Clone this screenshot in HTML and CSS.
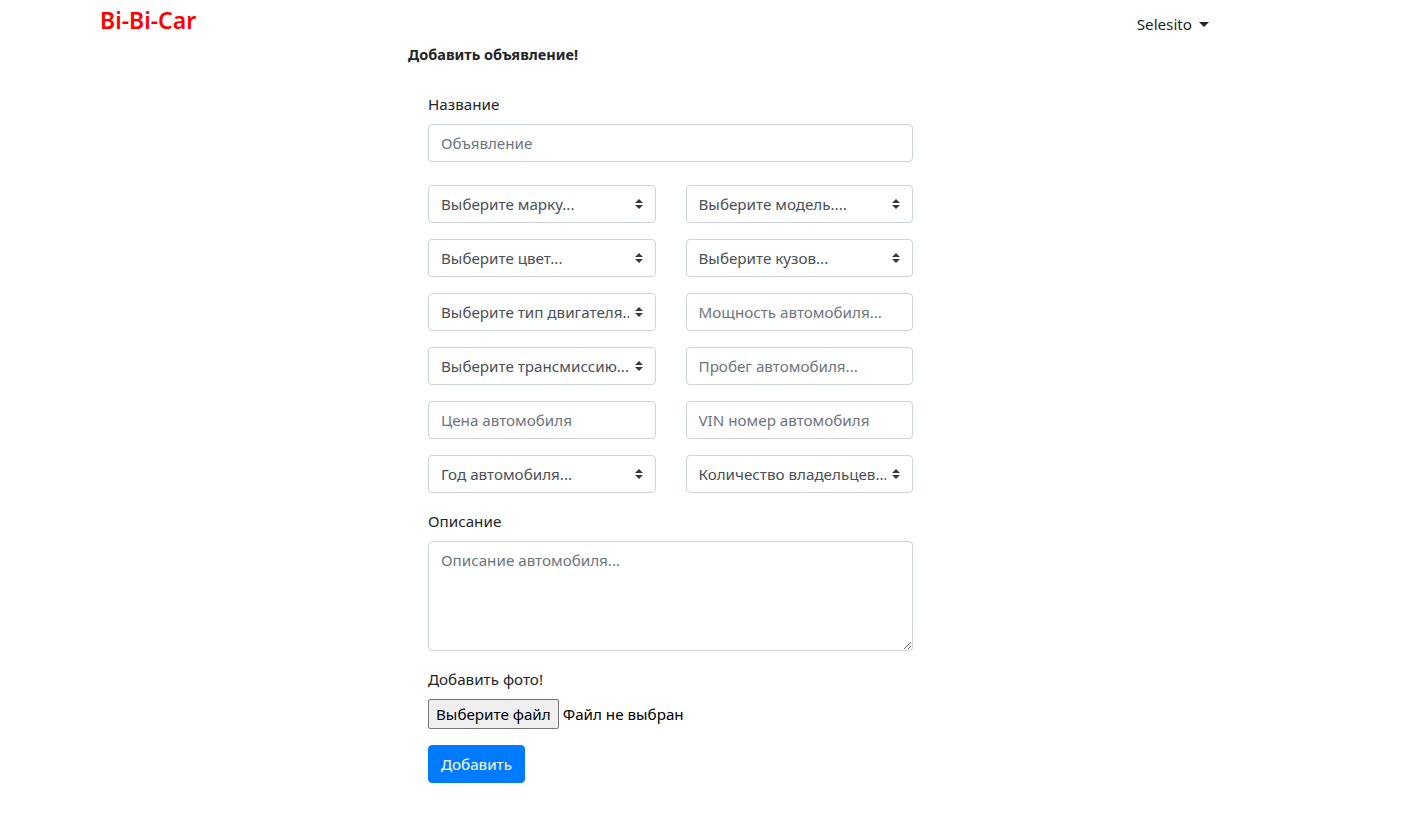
FILE: index.html
```html
<!DOCTYPE html>
<html lang="ru">
<head>
<meta charset="utf-8">
<title>Bi-Bi-Car</title>
<link rel="stylesheet" href="styles.css">
</head>
<body>
<nav class="navbar">
  <a class="brand" href="#">Bi-Bi-Car</a>
  <a class="user" href="#">Selesito <span class="caret"></span></a>
</nav>
<main class="page">
  <h6 class="title">Добавить объявление!</h6>
  <form class="form">
    <div class="group first">
      <label class="label">Название</label>
      <input class="control" type="text" placeholder="Объявление">
    </div>
    <div class="grid">
      <select class="control select"><option>Выберите марку...</option></select>
      <select class="control select"><option>Выберите модель....</option></select>
      <select class="control select"><option>Выберите цвет...</option></select>
      <select class="control select"><option>Выберите кузов...</option></select>
      <select class="control select"><option>Выберите тип двигателя...</option></select>
      <input class="control" type="text" placeholder="Мощность автомобиля...">
      <select class="control select"><option>Выберите трансмиссию...</option></select>
      <input class="control" type="text" placeholder="Пробег автомобиля...">
      <input class="control" type="text" placeholder="Цена автомобиля">
      <input class="control" type="text" placeholder="VIN номер автомобиля">
      <select class="control select"><option>Год автомобиля...</option></select>
      <select class="control select"><option>Количество владельцев...</option></select>
    </div>
    <div class="group">
      <label class="label">Описание</label>
      <textarea class="control area" placeholder="Описание автомобиля..."></textarea>
    </div>
    <div class="group">
      <label class="label">Добавить фото!</label>
      <div class="file">
        <span class="file-btn">Выберите файл</span>
        <span class="file-name">Файл не выбран</span>
      </div>
    </div>
    <button class="btn" type="button">Добавить</button>
  </form>
</main>
</body>
</html>
```
FILE: styles.css
```css
* { box-sizing: border-box; }
html, body { margin: 0; padding: 0; }
body {
  font-family: "Noto Sans", "Open Sans", sans-serif;
  font-size: 15.2px;
  line-height: 24px;
  color: #212529;
  background: #fff;
}
.navbar {
  display: flex;
  justify-content: space-between;
  align-items: flex-start;
  padding: 0 210px 0 100px;
  height: 40px;
}
.brand {
  color: #ff0000;
  font-size: 23px;
  font-weight: 600;
  line-height: 40px;
  text-decoration: none;
}
.user {
  color: #212529;
  text-decoration: none;
  margin-top: 12px;
  line-height: 24px;
  display: flex;
  align-items: center;
  gap: 4px;
}
.caret {
  display: inline-block;
  width: 0; height: 0;
  border-top: 5px solid #212529;
  border-left: 5px solid transparent;
  border-right: 5px solid transparent;
  margin-left: 3px;
}
.page {
  padding-left: 408px;
}
.title {
  margin: 5px 0 0;
  font-size: 14.5px;
  font-weight: 700;
  line-height: 19px;
}
.form {
  width: 485px;
  margin-left: 20px;
  padding-top: 28px;
}
.group { margin-bottom: 16px; }
.group.first { margin-bottom: 23px; }
.label {
  display: block;
  margin-bottom: 8px;
  line-height: 24px;
}
.control {
  display: block;
  width: 100%;
  height: 38px;
  padding: 6px 12px;
  font: inherit;
  line-height: 24px;
  color: #495057;
  background: #fff;
  border: 1px solid #ced4da;
  border-radius: 4px;
  outline: none;
}
.control::placeholder { color: #6c757d; opacity: 1; }
.select {
  appearance: none;
  -webkit-appearance: none;
  padding-right: 26px;
  background: #fff url("data:image/svg+xml,%3csvg xmlns='http://www.w3.org/2000/svg' width='4' height='5' viewBox='0 0 4 5'%3e%3cpath fill='%23343a40' d='M2 0L0 2h4zm0 5L0 3h4z'/%3e%3c/svg%3e") no-repeat right 12px center / 8px 10px;
  white-space: nowrap;
  overflow: hidden;
}
.grid {
  display: grid;
  grid-template-columns: 1fr 1fr;
  column-gap: 30px;
  row-gap: 16px;
  margin-bottom: 16px;
}
.area {
  height: 110px;
  resize: vertical;
}
.file {
  display: flex;
  align-items: center;
  gap: 4px;
  color: #000;
}
.file-btn {
  display: inline-block;
  height: 30px;
  line-height: 28px;
  padding: 0 7px;
  background: #efefef;
  border: 1px solid #767676;
  border-radius: 2px;
  color: #000;
}
.btn {
  display: block;
  height: 38px;
  padding: 6px 12px;
  font: inherit;
  line-height: 24px;
  color: #fff;
  background: #007bff;
  border: 1px solid #007bff;
  border-radius: 4px;
}
```
